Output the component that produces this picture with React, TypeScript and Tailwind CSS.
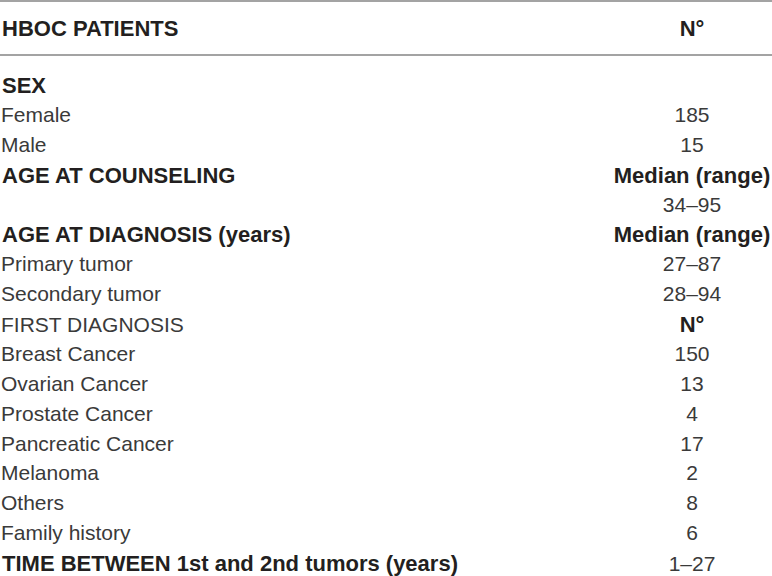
import React from 'react';

type Row = { label: string; value?: string; bold?: boolean; boldValue?: boolean };

const rows: Row[] = [
  { label: 'SEX', bold: true },
  { label: 'Female', value: '185' },
  { label: 'Male', value: '15' },
  { label: 'AGE AT COUNSELING', value: 'Median (range)', bold: true, boldValue: true },
  { label: '', value: '34–95' },
  { label: 'AGE AT DIAGNOSIS (years)', value: 'Median (range)', bold: true, boldValue: true },
  { label: 'Primary tumor', value: '27–87' },
  { label: 'Secondary tumor', value: '28–94' },
  { label: 'FIRST DIAGNOSIS', value: 'N°', boldValue: true },
  { label: 'Breast Cancer', value: '150' },
  { label: 'Ovarian Cancer', value: '13' },
  { label: 'Prostate Cancer', value: '4' },
  { label: 'Pancreatic Cancer', value: '17' },
  { label: 'Melanoma', value: '2' },
  { label: 'Others', value: '8' },
  { label: 'Family history', value: '6' },
  { label: 'TIME BETWEEN 1st and 2nd tumors (years)', value: '1–27', bold: true },
];

const App = () => {
  return (
    <div className="w-[772px] h-[576px] overflow-hidden bg-white text-[#231f20] font-['Liberation_Sans',Arial,sans-serif]">
      <div className="border-t-2 border-b-2 border-[#a3a3a3] h-[56px] grid grid-cols-[1fr_160px] items-center">
        <div className="pl-[2px] text-[22px] font-bold">HBOC PATIENTS</div>
        <div className="text-center text-[22px] font-bold">N°</div>
      </div>
      <div className="pt-[13px] flex flex-col">
        {rows.map((r, i) => (
          <div key={i} className="h-[29.875px] grid grid-cols-[1fr_160px] items-center">
            <div className={r.bold ? 'pl-[2px] text-[22px] font-bold' : 'pl-[1px] text-[21px] text-[#3a3a3a]'}>
              {r.label}
            </div>
            <div className={r.boldValue ? 'text-center text-[22px] font-bold' : 'text-center text-[21px] text-[#3a3a3a]'}>
              {r.value}
            </div>
          </div>
        ))}
      </div>
    </div>
  );
};

export default App;
